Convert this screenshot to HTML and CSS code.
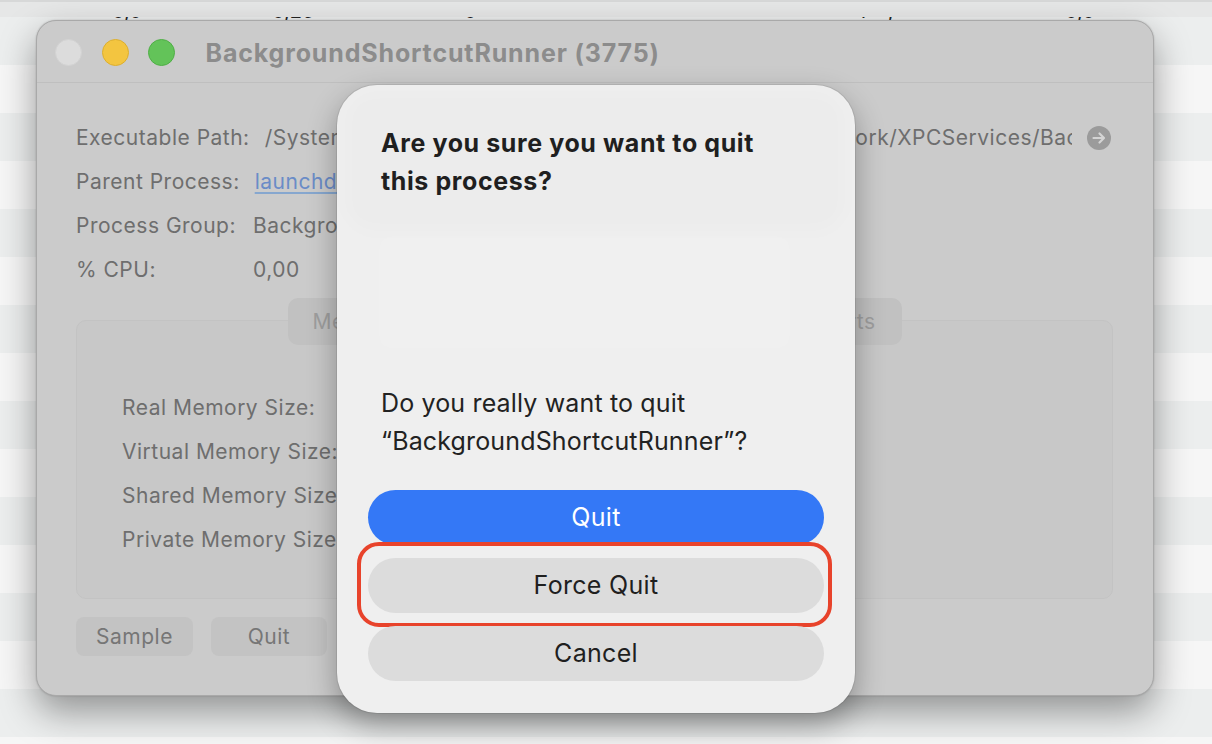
FILE: index.html
```html
<!DOCTYPE html>
<html lang="en">
<head>
<meta charset="utf-8">
<title>BackgroundShortcutRunner</title>
<link rel="stylesheet" href="styles.css">
</head>
<body>
<div class="desktop">
  <div class="topline"></div>
  <div class="stripes">
    <div class="peek">
      <span class="pc p1">0,0</span>
      <span class="pc p2">0,25</span>
      <span class="pc p3">0</span>
      <span class="pc p4">1 ,</span>
      <span class="pc p5">0,0</span>
    </div>
  </div>
  <div class="bottomline"></div>
  <div class="bottomfill"></div>

  <div class="window">
    <div class="titlebar">
      <span class="light close"></span>
      <span class="light min"></span>
      <span class="light max"></span>
      <span class="wtitle">BackgroundShortcutRunner (3775)</span>
    </div>
    <div class="wbody">
      <div class="info">
        <div class="row">
          <span class="lbl">Executable Path:</span>
          <span class="val path">/System/Library/PrivateFrameworks/WorkflowKit.framework/XPCServices/BackgroundShortcutRunner.xpc</span>
          <svg class="goarrow" width="24" height="24" viewBox="0 0 24 24"><circle cx="12" cy="12" r="12" fill="#9b9b9b"/><path d="M6.5 12h10M12.5 7.5l4.5 4.5-4.5 4.5" fill="none" stroke="#d4d4d4" stroke-width="2.2" stroke-linecap="round" stroke-linejoin="round"/></svg>
        </div>
        <div class="row"><span class="lbl">Parent Process:</span><span class="val link">launchd (1)</span></div>
        <div class="row"><span class="lbl">Process Group:</span><span class="val">BackgroundShortcutRunner (3775)</span></div>
        <div class="row"><span class="lbl">% CPU:</span><span class="val">0,00</span></div>
      </div>

      <div class="tabs">
        <div class="seg">
          <span class="segi s1">Memory</span>
          <span class="segi s2">Statistics</span>
          <span class="segi s3">Open Files and Ports</span>
        </div>
        <div class="panel">
          <div class="memrow"><span class="mlbl">Real Memory Size:</span><span class="mval">36,4 MB</span></div>
          <div class="memrow"><span class="mlbl">Virtual Memory Size:</span><span class="mval">390,03 GB</span></div>
          <div class="memrow"><span class="mlbl">Shared Memory Size:</span><span class="mval">30,8 MB</span></div>
          <div class="memrow"><span class="mlbl">Private Memory Size:</span><span class="mval">5,9 MB</span></div>
        </div>
      </div>

      <div class="actions">
        <span class="wbtn b1">Sample</span>
        <span class="wbtn b2">Quit</span>
      </div>
    </div>
  </div>

  <div class="sheet">
    <div class="glass g1"></div>
    <div class="glass g2"></div>
    <div class="sheet-inner">
      <div class="stitle">Are you sure you want to quit<br>this process?</div>
      <div class="smsg">Do you really want to quit<br>“BackgroundShortcutRunner”?</div>
      <div class="sbtns">
        <div class="sbtn primary">Quit</div>
        <div class="sbtn secondary marked">Force Quit</div>
        <div class="sbtn secondary">Cancel</div>
      </div>
    </div>
  </div>
</div>
</body>
</html>
```

FILE: styles.css
```css
* { box-sizing: border-box; }
html, body { margin: 0; padding: 0; }
body {
  width: 1212px;
  height: 744px;
  overflow: hidden;
  font-family: Inter, "Noto Sans", "Liberation Sans", sans-serif;
  background: #e6e7e7;
}
.desktop {
  position: relative;
  width: 1212px;
  height: 744px;
  overflow: hidden;
}
.topline { height: 2px; background: #d7d8d8; }
.stripes {
  height: 732px;
  background: repeating-linear-gradient(to bottom, #eceeee 0 48px, #f6f6f6 48px 96px);
}
.bottomline { height: 1px; background: #b4b4b4; }
.bottomfill { height: 9px; background: linear-gradient(#eaeaea, #dedede); }

.peek {
  height: 4px;
  margin-top: 15px;
  overflow: hidden;
  display: flex;
  font-size: 20px;
  line-height: 20px;
  color: #222;
}
.pc { display: block; margin-top: -16px; }
.p1 { margin-left: 112px; width: 160px; }
.p2 { width: 192px; }
.p3 { width: 394px; }
.p4 { width: 207px; letter-spacing: 8px; }

/* Window */
.window {
  position: absolute;
  z-index: 1;
  left: 36px;
  top: 20px;
  width: 1118px;
  height: 676px;
  background: #cbcbcb;
  border: 1px solid #a9a9a9;
  border-radius: 20px;
  box-shadow: 0 16px 36px rgba(0,0,0,0.38), 0 0 2px rgba(0,0,0,0.2);
  overflow: hidden;
}
.titlebar {
  height: 62px;
  border-bottom: 1px solid #bfbfbf;
  display: flex;
  align-items: center;
  padding-left: 18px;
  padding-top: 2px;
}
.light {
  width: 27px;
  height: 27px;
  border-radius: 50%;
  margin-right: 19.5px;
  flex: none;
}
.close { background: #dcdcdc; border: 1px solid #d2d2d2; }
.min { background: #f3c540; border: 1px solid #dcae2e; }
.max { background: #63c359; border: 1px solid #4fae46; }
.wtitle {
  margin-left: 11px;
  font-size: 25px;
  font-weight: 700;
  color: #8c8c8c;
  letter-spacing: 0.85px;
}
.wbody {
  padding: 33px 40px 0 39px;
  font-size: 21px;
  letter-spacing: 0.5px;
  color: #6e6e6e;
}
.row {
  display: flex;
  align-items: center;
  height: 44px;
  line-height: 44px;
  white-space: nowrap;
}
.lbl {
  min-width: 177px;
  padding-right: 15px;
  flex: none;
}
.val { flex: none; }
.val.path {
  flex: 1;
  min-width: 0;
  overflow: hidden;
}
.link {
  color: #6a8cc7;
  text-decoration: underline;
  text-decoration-color: #86a7cf;
  text-underline-offset: 3px;
}
.goarrow { flex: none; margin-left: 15px; margin-right: 2px; }

.tabs { margin-top: 6px; }
.seg {
  position: relative;
  z-index: 1;
  width: 614px;
  height: 47px;
  margin: 0 auto;
  display: flex;
  background: #c1c1c1;
  border-radius: 10px;
  color: #9e9e9e;
  font-size: 21px;
  line-height: 47px;
}
.segi { text-align: center; }
.s1 { width: 140px; padding-left: 25px; text-align: left; }
.s2 { width: 170px; }
.s3 { flex: 1; text-align: right; padding-right: 26px; }
.panel {
  margin-top: -25px;
  height: 279px;
  border: 1px solid #c3c3c3;
  background: #c8c8c8;
  border-radius: 10px;
  padding: 65px 0 0 45px;
}
.memrow {
  height: 44px;
  line-height: 44px;
  display: flex;
  white-space: nowrap;
}
.mlbl { width: 240px; }
.actions {
  margin-top: 18px;
  display: flex;
  gap: 18px;
}
.wbtn {
  display: block;
  height: 39px;
  line-height: 39px;
  text-align: center;
  background: #c3c3c3;
  border-radius: 8px;
  color: #767676;
}
.b1 { width: 117px; }
.b2 { width: 116px; }

/* Sheet */
.sheet {
  position: absolute;
  z-index: 2;
  left: 337px;
  top: 85px;
  width: 518px;
  height: 628px;
  background: #efefef;
  border-radius: 40px;
  box-shadow: 0 12px 30px rgba(0,0,0,0.32), 0 0 0 1px rgba(0,0,0,0.08);
  overflow: hidden;
}
.glass {
  position: absolute;
  filter: blur(8px);
}
.g1 { left: 8px; top: 6px; width: 500px; height: 140px; background: rgba(0,0,0,0.012); border-radius: 30px; }
.g2 { left: 40px; top: 150px; width: 415px; height: 115px; background: rgba(255,255,255,0.1); }
.sheet-inner {
  position: relative;
  padding: 39px 31px 32px;
}
.stitle {
  margin-left: 13px;
  font-size: 25px;
  font-weight: 700;
  letter-spacing: 0.6px;
  line-height: 38px;
  color: #1f1f1f;
}
.smsg {
  margin-left: 13px;
  margin-top: 184px;
  font-size: 25px;
  letter-spacing: 0.15px;
  line-height: 38px;
  color: #222;
}
.sbtns {
  margin-top: 30px;
  display: flex;
  flex-direction: column;
  gap: 13px;
}
.sbtn {
  position: relative;
  height: 55px;
  line-height: 55px;
  border-radius: 28px;
  text-align: center;
  font-size: 25px;
  letter-spacing: 0.3px;
  color: #1f1f1f;
}
.primary { background: #3478f6; color: #fff; }
.secondary { background: #dcdcdc; }
.marked::after {
  content: "";
  position: absolute;
  left: -11px;
  right: -8px;
  top: -16px;
  bottom: -14px;
  border: 4px solid #e8432b;
  border-radius: 22px;
}
```
